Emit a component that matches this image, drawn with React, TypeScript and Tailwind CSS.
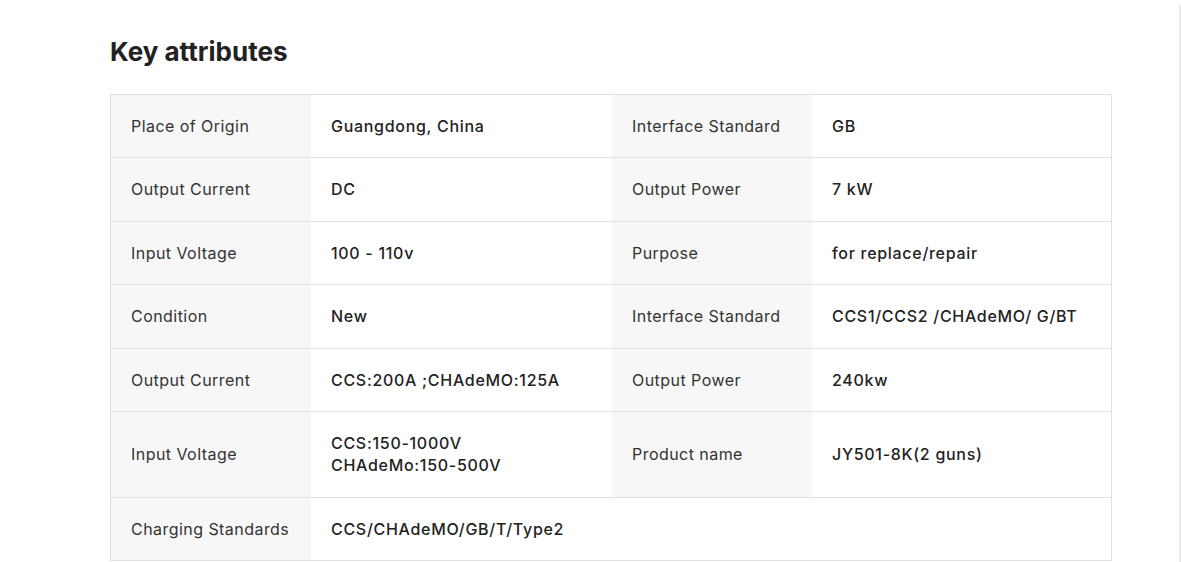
import React from "react";

type Row = { l1: string; v1: React.ReactNode; l2?: string; v2?: string };

const rows: Row[] = [
  { l1: "Place of Origin", v1: "Guangdong, China", l2: "Interface Standard", v2: "GB" },
  { l1: "Output Current", v1: "DC", l2: "Output Power", v2: "7 kW" },
  { l1: "Input Voltage", v1: "100 - 110v", l2: "Purpose", v2: "for replace/repair" },
  { l1: "Condition", v1: "New", l2: "Interface Standard", v2: "CCS1/CCS2 /CHAdeMO/ G/BT" },
  { l1: "Output Current", v1: "CCS:200A ;CHAdeMO:125A", l2: "Output Power", v2: "240kw" },
  {
    l1: "Input Voltage",
    v1: (
      <>
        CCS:150-1000V
        <br />
        CHAdeMo:150-500V
      </>
    ),
    l2: "Product name",
    v2: "JY501-8K(2 guns)",
  },
];

export default function App() {
  return (
    <div
      className="flex w-[1181px] h-[562px] bg-white overflow-hidden"
      style={{ fontFamily: "Inter, 'Noto Sans', sans-serif" }}
    >
      <div className="w-[1179px] pl-[110px] pt-[36px]">
        <h2 className="text-[26px] leading-[32px] font-bold text-[#222]">Key attributes</h2>
        <div className="mt-[26px] w-[1002px] border border-[#e0e0e0] text-[16px] leading-[1.4]">
          {rows.map((r, i) => (
            <div
              key={i}
              className={`grid grid-cols-[200px_301px_200px_299px] ${i > 0 ? "border-t border-[#e0e0e0]" : ""}`}
            >
              <div className="bg-[#f7f7f7] px-5 py-5 flex items-center text-[#333] tracking-[0.45px]">{r.l1}</div>
              <div className="px-5 py-5 flex items-center text-[#222] font-medium tracking-[0.7px]">
                <div>{r.v1}</div>
              </div>
              <div className="bg-[#f7f7f7] px-5 py-5 flex items-center text-[#333] tracking-[0.45px]">{r.l2}</div>
              <div className="px-5 py-5 flex items-center text-[#222] font-medium tracking-[0.7px]">{r.v2}</div>
            </div>
          ))}
          <div className="grid grid-cols-[200px_800px] border-t border-[#e0e0e0]">
            <div className="bg-[#f7f7f7] px-5 py-5 flex items-center text-[#333] tracking-[0.45px]">Charging Standards</div>
            <div className="px-5 py-5 flex items-center text-[#222] font-medium tracking-[0.7px]">CCS/CHAdeMO/GB/T/Type2</div>
          </div>
        </div>
      </div>
      <div className="mt-[5px] w-[2px] h-[600px] bg-[#ececec]" />
    </div>
  );
}
